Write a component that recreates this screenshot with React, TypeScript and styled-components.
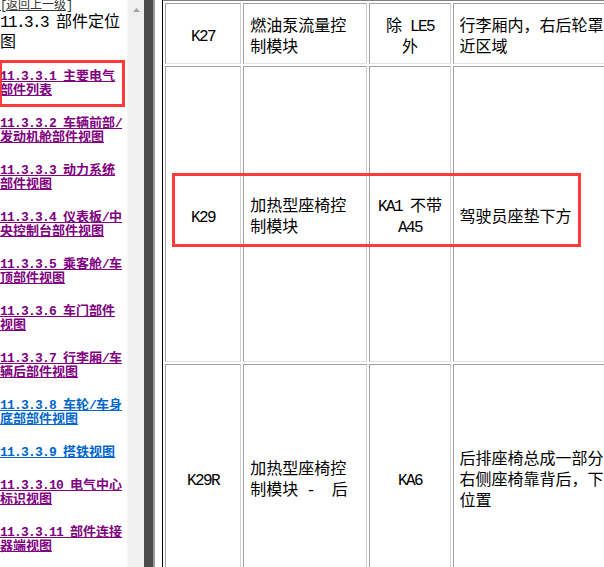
import React from "react";
import styled, { createGlobalStyle } from "styled-components";

const Global = createGlobalStyle`
  html, body { margin: 0; padding: 0; background: #fff; overflow: hidden; }
  body { font-family: "Liberation Mono", "Noto Sans CJK SC", monospace; color: #000; }
  * { box-sizing: border-box; }
`;

const Page = styled.div`
  display: flex;
  width: 604px;
  height: 567px;
  overflow: hidden;
`;

const LeftFrame = styled.div`
  display: flex;
  flex: none;
  width: 144px;
  height: 100%;
`;

const Sidebar = styled.nav`
  position: relative;
  flex: none;
  width: 127px;
  height: 100%;
  overflow: hidden;
  background: #fff;
  display: flex;
  flex-direction: column;
`;

const BackLink = styled.a`
  display: block;
  font-size: 12px;
  line-height: 13px;
  color: #333;
  text-decoration: underline;
  white-space: nowrap;
`;

const Heading = styled.h1`
  margin: 0 0 17px;
  font-size: 16px;
  line-height: 20px;
  font-weight: normal;
`;

const NavList = styled.div`
  display: flex;
  flex-direction: column;
  gap: 19px;
`;

const NavLink = styled.a<{ $blue?: boolean }>`
  display: block;
  font-size: 13px;
  line-height: 14px;
  font-weight: bold;
  color: ${(p) => (p.$blue ? "#0066cc" : "#800080")};
  text-decoration: underline;
`;

const Latin = styled.span<{ $ls: number }>`
  letter-spacing: ${(p) => p.$ls}em;
`;

const Scrollbar = styled.div`
  flex: none;
  width: 17px;
  height: 100%;
  background: #f0f0f0;
  border-left: 1px solid #f7f7f7;
  display: flex;
  justify-content: center;
  padding-top: 8px;
`;

const Splitter = styled.div`
  flex: none;
  width: 11px;
  height: 100%;
  background: #4b4b4b;
  border-right: 2px solid #9a9a9a;
`;

const RightFrame = styled.main`
  position: relative;
  flex: 1;
  min-width: 0;
  height: 100%;
  overflow: hidden;
  background: #fff;
  padding-left: 7px;
`;

const Table = styled.table`
  table-layout: fixed;
  width: 467px;
  border-collapse: separate;
  border-spacing: 2px;
  border-left: 1px solid #000;
  border-top: 2px solid #808080;
  margin-top: -1px;
`;

const Cell = styled.td<{ $w: number; $center?: boolean }>`
  width: ${(p) => p.$w}px;
  border: 1px solid;
  border-color: #a0a0a0 #d0d0d0 #e3e3e3 #a0a0a0;
  padding: 8px 6px 0;
  vertical-align: middle;
  font-size: 16px;
  line-height: 21px;
  text-align: ${(p) => (p.$center ? "center" : "left")};
`;

const Row = styled.tr<{ $h: number }>`
  height: ${(p) => p.$h}px;
`;

const Annotation = styled.div<{ $x: number; $y: number; $w: number; $h: number }>`
  position: absolute;
  left: ${(p) => p.$x}px;
  top: ${(p) => p.$y}px;
  width: ${(p) => p.$w}px;
  height: ${(p) => p.$h}px;
  border: 3px solid #ff3a3a;
  pointer-events: none;
`;

function Mixed({ text, ls }: { text: string; ls: number }) {
  const parts = text.split(/([\x20-\x7e]+)/).filter((s) => s.length > 0);
  return (
    <>
      {parts.map((s, i) =>
        /^[\x20-\x7e]+$/.test(s) ? (
          <Latin key={i} $ls={ls}>
            {s}
          </Latin>
        ) : (
          <React.Fragment key={i}>{s}</React.Fragment>
        )
      )}
    </>
  );
}

const navItems: { label: string; blue?: boolean }[] = [
  { label: "11.3.3.1 主要电气部件列表" },
  { label: "11.3.3.2 车辆前部/发动机舱部件视图" },
  { label: "11.3.3.3 动力系统部件视图" },
  { label: "11.3.3.4 仪表板/中央控制台部件视图" },
  { label: "11.3.3.5 乘客舱/车顶部件视图" },
  { label: "11.3.3.6 车门部件视图" },
  { label: "11.3.3.7 行李厢/车辆后部件视图" },
  { label: "11.3.3.8 车轮/车身底部部件视图", blue: true },
  { label: "11.3.3.9 搭铁视图", blue: true },
  { label: "11.3.3.10 电气中心标识视图" },
  { label: "11.3.3.11 部件连接器端视图" },
];

const rows: { h: number; cells: [string, string, string, string] }[] = [
  {
    h: 61,
    cells: ["K27", "燃油泵流量控制模块", "除 LE5 外", "行李厢内，右后轮罩附近区域"],
  },
  {
    h: 296,
    cells: ["K29", "加热型座椅控制模块", "KA1 不带 A45", "驾驶员座垫下方"],
  },
  {
    h: 226,
    cells: [
      "K29R",
      "加热型座椅控制模块 -\u00a0 后",
      "KA6",
      "后排座椅总成一部分，右侧座椅靠背后，下方位置",
    ],
  },
];

const widths = [76, 124, 81, 174];

export default function App() {
  return (
    <>
      <Global />
      <Page>
        <LeftFrame>
          <Sidebar>
            <BackLink href="#">
              <Mixed text="[返回上一级]" ls={-0.1} />
            </BackLink>
            <Heading>
              <Mixed text="11.3.3 部件定位图" ls={-0.1} />
            </Heading>
            <NavList>
              {navItems.map((it) => (
                <NavLink key={it.label} href="#" $blue={it.blue}>
                  <Mixed text={it.label} ls={-0.0615} />
                </NavLink>
              ))}
            </NavList>
            <Annotation $x={-1} $y={60} $w={126} $h={47} />
          </Sidebar>
          <Scrollbar>
            <svg width="7" height="4" viewBox="0 0 7 4">
              <path d="M0 4 L3.5 0 L7 4 Z" fill="#a3a3a3" />
            </svg>
          </Scrollbar>
        </LeftFrame>
        <Splitter />
        <RightFrame>
          <Table>
            <tbody>
              {rows.map((r) => (
                <Row key={r.cells[0]} $h={r.h}>
                  {r.cells.map((c, i) => (
                    <Cell key={i} $w={widths[i]} $center={i === 0 || i === 2}>
                      <Mixed text={c} ls={-0.1} />
                    </Cell>
                  ))}
                </Row>
              ))}
            </tbody>
          </Table>
          <Annotation $x={17} $y={173} $w={409} $h={74} />
        </RightFrame>
      </Page>
    </>
  );
}
